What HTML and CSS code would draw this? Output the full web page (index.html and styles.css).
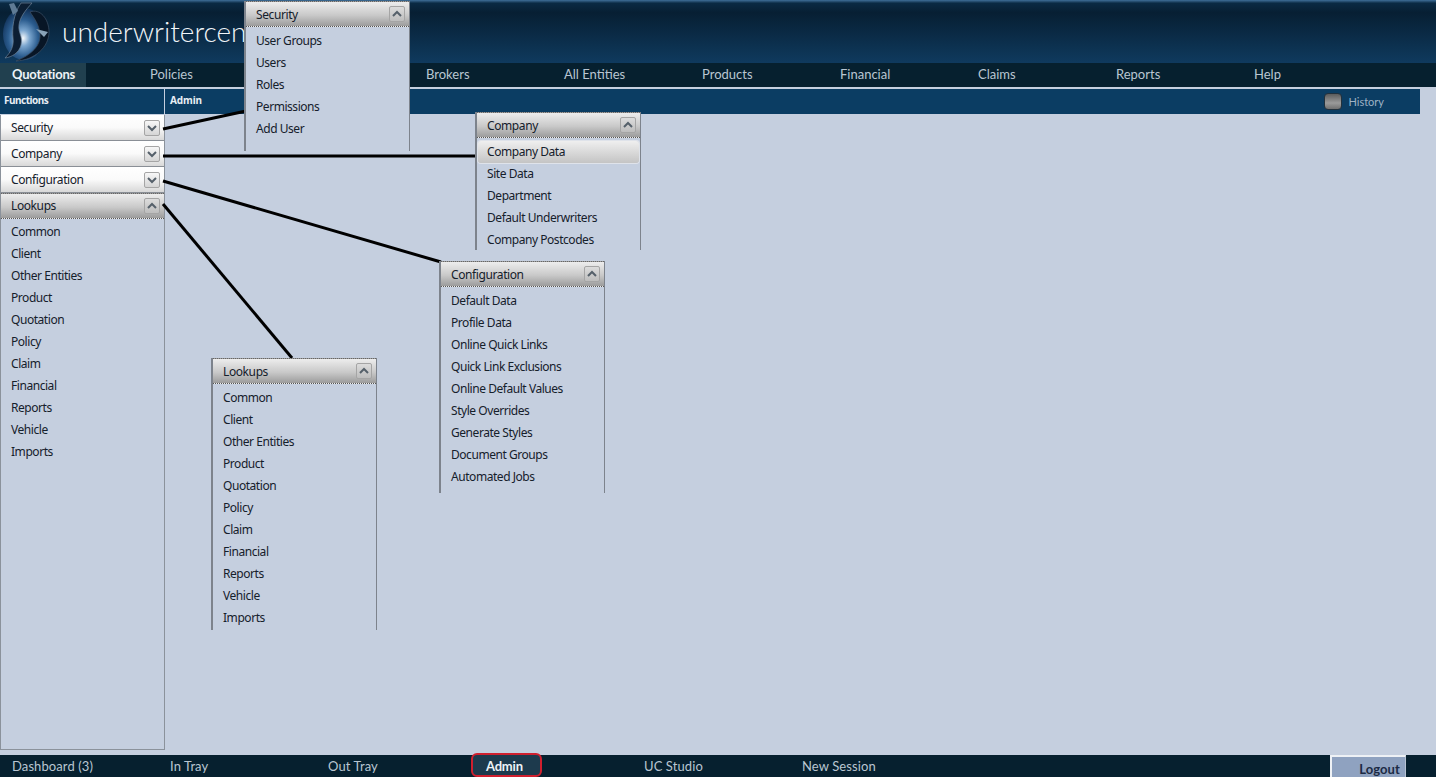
FILE: index.html
```html
<!DOCTYPE html>
<html lang="en">
<head>
    <meta charset="UTF-8">
    <title>underwritercentre - Admin</title>
    <link rel="stylesheet" href="styles.css">
</head>
<body>
    <div class="app">
        <div class="header">
            <svg class="logo" width="50" height="60" viewBox="0 0 50 60">
                <defs>
                    <radialGradient id="ball" cx="0.48" cy="0.58" r="0.55">
                        <stop offset="0" stop-color="#f4f8fb"/>
                        <stop offset="0.28" stop-color="#7ba6cf"/>
                        <stop offset="0.65" stop-color="#2b5c8e"/>
                        <stop offset="1" stop-color="#12335a"/>
                    </radialGradient>
                </defs>
                <ellipse cx="23" cy="32" rx="21" ry="26" fill="url(#ball)"/>
                <path d="M20 1 L31 1 C24 9 19 15 18 23 C17 31 22 34 20 43 C18 51 11 55 4 56 C10 50 13 44 12 36 C11 28 12 12 20 1 Z" fill="#0c1e33" stroke="#6d8298" stroke-width="0.7"/>
                <path d="M29 10 C39 6 48 17 48 30 C48 45 34 58 15 59 C30 53 40 44 39 32 C38 22 33 16 29 10 Z" fill="#081626" stroke="#3d5066" stroke-width="0.7"/>
                <path d="M35 27 L47 30 L43 35 Z" fill="#8aa3b8"/>
                <path d="M8 2 L13 1 L17 9 L12 13 Z" fill="#5f7b95"/>
            </svg>
            <div class="brand">underwritercen</div>
        </div>
        <div class="nav">
            <a class="nav-item active">Quotations</a>
            <a class="nav-item">Policies</a>
            <a class="nav-item"></a>
            <a class="nav-item">Brokers</a>
            <a class="nav-item">All Entities</a>
            <a class="nav-item">Products</a>
            <a class="nav-item">Financial</a>
            <a class="nav-item">Claims</a>
            <a class="nav-item">Reports</a>
            <a class="nav-item">Help</a>
        </div>
        <div class="subbar">
            <div class="subbar-functions">Functions</div>
            <div class="subbar-title">Admin</div>
            <div class="history">
                <span class="history-btn"></span>
                <span>History</span>
            </div>
        </div>
        <div class="main">
            <div class="sidebar">
                <div class="section-head closed">Security <span class="chev"><svg width="10" height="8" viewBox="0 0 10 8"><path d="M1 2 L5 6 L9 2" /></svg></span></div>
                <div class="section-head closed">Company <span class="chev"><svg width="10" height="8" viewBox="0 0 10 8"><path d="M1 2 L5 6 L9 2" /></svg></span></div>
                <div class="section-head closed">Configuration <span class="chev"><svg width="10" height="8" viewBox="0 0 10 8"><path d="M1 2 L5 6 L9 2" /></svg></span></div>
                <div class="section-head open">Lookups <span class="chev"><svg width="10" height="8" viewBox="0 0 10 8"><path d="M1 6 L5 2 L9 6" /></svg></span></div>
                <ul class="items">
                    <li>Common</li><li>Client</li><li>Other Entities</li><li>Product</li><li>Quotation</li><li>Policy</li><li>Claim</li><li>Financial</li><li>Reports</li><li>Vehicle</li><li>Imports</li>
                </ul>
            </div>
        </div>
        <div class="footer">
            <a class="foot-item">Dashboard (3)</a>
            <a class="foot-item">In Tray</a>
            <a class="foot-item">Out Tray</a>
            <a class="foot-item current"><span class="admin-tab">Admin</span></a>
            <a class="foot-item">UC Studio</a>
            <a class="foot-item">New Session</a>
            <a class="logout">Logout</a>
        </div>
    </div>

    <!-- callouts drawn over the page -->
    <svg class="lines" width="1436" height="777">
        <line x1="163" y1="129" x2="246" y2="111"/>
        <line x1="163" y1="156" x2="478" y2="156"/>
        <line x1="163" y1="181" x2="441" y2="262"/>
        <line x1="163" y1="204" x2="292" y2="358"/>
    </svg>

    <div class="popup popup-security">
        <div class="section-head open">Security <span class="chev"><svg width="10" height="8" viewBox="0 0 10 8"><path d="M1 6 L5 2 L9 6" /></svg></span></div>
        <ul class="items">
            <li>User Groups</li><li>Users</li><li>Roles</li><li>Permissions</li><li>Add User</li>
        </ul>
    </div>

    <div class="popup popup-company">
        <div class="section-head open">Company <span class="chev"><svg width="10" height="8" viewBox="0 0 10 8"><path d="M1 6 L5 2 L9 6" /></svg></span></div>
        <ul class="items">
            <li class="hover">Company Data</li><li>Site Data</li><li>Department</li><li>Default Underwriters</li><li>Company Postcodes</li>
        </ul>
    </div>

    <div class="popup popup-config">
        <div class="section-head open">Configuration <span class="chev"><svg width="10" height="8" viewBox="0 0 10 8"><path d="M1 6 L5 2 L9 6" /></svg></span></div>
        <ul class="items">
            <li>Default Data</li><li>Profile Data</li><li>Online Quick Links</li><li>Quick Link Exclusions</li><li>Online Default Values</li><li>Style Overrides</li><li>Generate Styles</li><li>Document Groups</li><li>Automated Jobs</li>
        </ul>
    </div>

    <div class="popup popup-lookups">
        <div class="section-head open">Lookups <span class="chev"><svg width="10" height="8" viewBox="0 0 10 8"><path d="M1 6 L5 2 L9 6" /></svg></span></div>
        <ul class="items">
            <li>Common</li><li>Client</li><li>Other Entities</li><li>Product</li><li>Quotation</li><li>Policy</li><li>Claim</li><li>Financial</li><li>Reports</li><li>Vehicle</li><li>Imports</li>
        </ul>
    </div>
</body>
</html>
```

FILE: styles.css
```css
body, html {
    margin: 0;
    padding: 0;
    height: 100%;
    overflow: hidden;
    background-color: #c5cfdf;
    font-family: "Noto Sans", "Open Sans", sans-serif;
    font-size: 12px;
    color: #15202b;
}

.app {
    display: flex;
    flex-direction: column;
    height: 777px;
}

.header {
    height: 63px;
    flex: none;
    display: flex;
    align-items: center;
    overflow: hidden;
    background: linear-gradient(to bottom, #3f6f99 0%, #0a2a44 5%, #071f33 20%, #0f3a5e 100%);
}

.logo {
    margin-left: 1px;
    flex: none;
}

.brand {
    margin-left: 11px;
    padding-bottom: 2px;
    font-family: Lato, "Liberation Sans", sans-serif;
    font-weight: 300;
    font-size: 28px;
    color: #f2f6fa;
    white-space: nowrap;
}

.nav {
    height: 24px;
    flex: none;
    display: flex;
    background-color: #06202f;
    border-bottom: 2px solid #c5cfdf;
    font-family: Lato, "Liberation Sans", sans-serif;
    font-size: 13px;
    color: #b9c6d2;
}

.nav-item {
    width: 138px;
    box-sizing: border-box;
    line-height: 23px;
    white-space: nowrap;
}

.nav-item.active {
    width: 150px;
    padding-left: 12px;
    font-weight: 700;
    letter-spacing: -0.2px;
    color: #eef3f7;
    background: linear-gradient(to right, #21404f 0, #21404f 86px, transparent 86px);
}

.subbar {
    width: 1420px;
    height: 25px;
    flex: none;
    display: flex;
    align-items: center;
    background-color: #0b3d63;
    color: #e8eef4;
    font-size: 10px;
    font-weight: 700;
}

.subbar-functions {
    width: 165px;
    height: 100%;
    box-sizing: border-box;
    padding-left: 4px;
    line-height: 23px;
    letter-spacing: -0.5px;
    border-right: 1px solid #c5cfdf;
}

.subbar-title {
    margin-left: 5px;
    margin-bottom: 3px;
    letter-spacing: -0.1px;
}

.history {
    margin-left: auto;
    margin-right: 36px;
    display: flex;
    align-items: center;
    gap: 6px;
    font-family: Lato, "Liberation Sans", sans-serif;
    font-size: 11px;
    font-weight: 400;
    color: #9fb2c3;
}

.history-btn {
    width: 16px;
    height: 15px;
    border-radius: 4px;
    border: 1px solid #22313d;
    background: linear-gradient(to bottom, #5c5c5c, #9a9a9a 60%, #707070);
}

.main {
    flex: 1;
    min-height: 0;
    padding: 1px 0 5px;
    box-sizing: border-box;
}

.sidebar {
    width: 165px;
    height: 100%;
    box-sizing: border-box;
    border: 1px solid #8b929b;
    border-top: 0;
}

.section-head {
    height: 26px;
    box-sizing: border-box;
    display: flex;
    align-items: center;
    justify-content: space-between;
    padding: 0 4px 0 10px;
    font-size: 12px;
    letter-spacing: -0.4px;
    color: #15202b;
    border-bottom: 1px solid #8a8f96;
}

.section-head.closed {
    background: linear-gradient(to bottom, #ffffff 0%, #fafafa 50%, #d8d8d8 100%);
}

.section-head.open {
    padding-bottom: 1px;
    background: linear-gradient(to bottom, #ededed 0%, #c9c9c9 55%, #9c9c9c 100%);
    border-top: 1px dotted #666;
    border-bottom: 1px dotted #555;
}

.chev {
    width: 14px;
    height: 14px;
    display: flex;
    align-items: center;
    justify-content: center;
    border: 1px solid #a5a5a5;
    border-radius: 2px;
    background: linear-gradient(to bottom, #f7f7f7, #d5d5d5);
}

.chev path {
    fill: none;
    stroke: #55606a;
    stroke-width: 2;
}

.open .chev {
    background: linear-gradient(to bottom, #dcdcdc, #bdbdbd);
}

.items {
    list-style: none;
    margin: 0;
    padding: 2px 0 0;
    letter-spacing: -0.45px;
}

.items li {
    height: 22px;
    line-height: 22px;
    padding-left: 10px;
    white-space: nowrap;
}

.items li.hover {
    margin: 0 1px;
    padding-left: 9px;
    border-radius: 3px;
    box-shadow: 0 0 0 1px #dfe3ea;
    background: linear-gradient(to bottom, #efefef, #c4c4c4);
}

.footer {
    height: 22px;
    flex: none;
    display: flex;
    align-items: center;
    background-color: #06202f;
    font-family: Lato, "Liberation Sans", sans-serif;
    font-size: 13px;
    letter-spacing: 0.1px;
    color: #b9c6d2;
}

.foot-item {
    width: 158px;
    box-sizing: border-box;
    padding-left: 12px;
    line-height: 22px;
    white-space: nowrap;
}

.foot-item.current {
    color: #eef3f7;
    font-weight: 700;
    letter-spacing: -0.2px;
}

.admin-tab {
    display: inline-block;
    position: relative;
    z-index: 0;
}

/* red marker round the current tab */
.admin-tab::before {
    content: "";
    position: absolute;
    z-index: -1;
    left: -15px;
    top: -2px;
    width: 67px;
    height: 20px;
    border: 2px solid #d01f2e;
    border-radius: 6px;
    background-color: #1d3a4d;
}

.logout {
    margin-left: auto;
    margin-right: 30px;
    width: 76px;
    height: 22px;
    box-sizing: border-box;
    padding-right: 5px;
    text-align: right;
    line-height: 24px;
    font-weight: 700;
    color: #1c2a44;
    background-color: #8fa2c0;
    border-top: 2px solid #eef1f5;
    border-left: 2px solid #eef1f5;
    border-right: 1px solid #b7c2d3;
}

.lines {
    position: absolute;
    left: 0;
    top: 0;
}

.lines line {
    stroke: #000;
    stroke-width: 3;
}

.popup {
    position: absolute;
    width: 166px;
    box-sizing: border-box;
    border-left: 2px solid #7d838c;
    border-right: 1px solid #7d838c;
    background-color: #c5cfdf;
}

.popup .section-head.open {
    padding-bottom: 0;
}

.popup .items {
    padding-top: 3px;
}

.popup-security {
    left: 244px;
    top: 1px;
    height: 150px;
}

.popup-company {
    left: 475px;
    top: 112px;
    height: 138px;
}

.popup-config {
    left: 439px;
    top: 261px;
    height: 232px;
}

.popup-lookups {
    left: 211px;
    top: 358px;
    height: 272px;
}
```
